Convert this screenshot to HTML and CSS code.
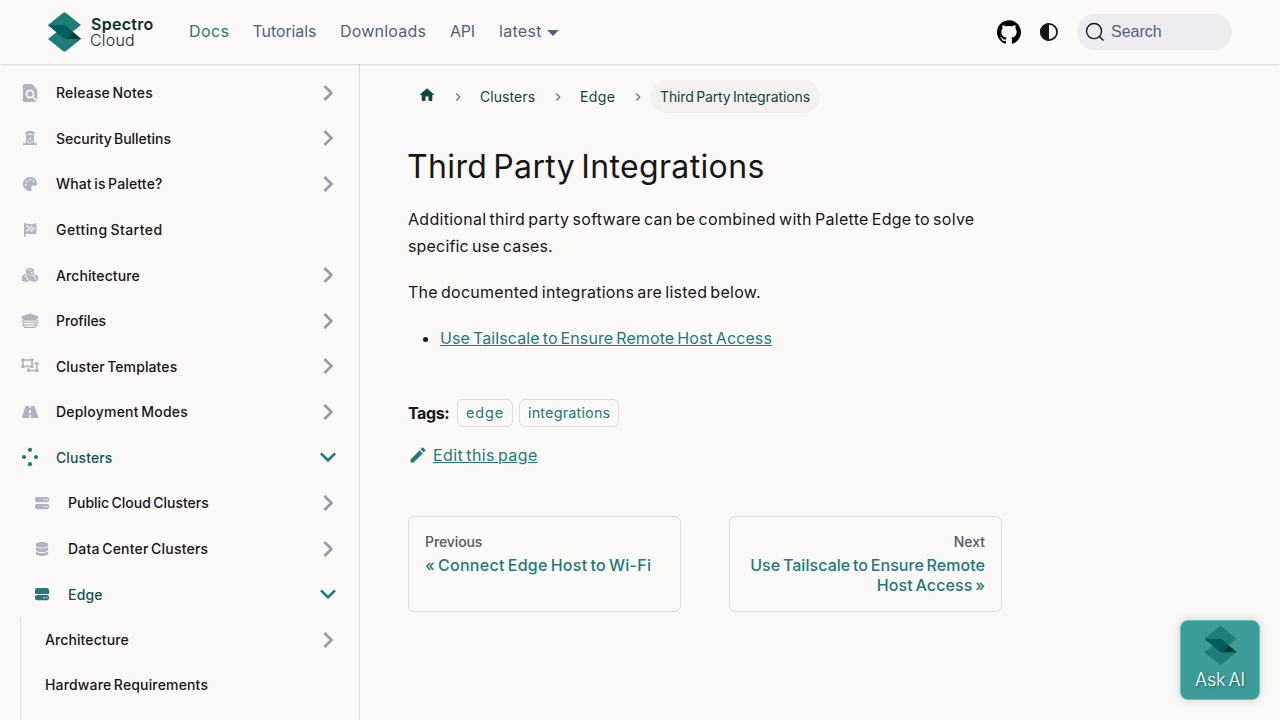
FILE: index.html
```html
<!DOCTYPE html>
<html lang="en">
<head>
<meta charset="utf-8">
<title>Third Party Integrations | Palette</title>
<link rel="stylesheet" href="styles.css">
</head>
<body>
<svg class="defs" width="0" height="0">
  <symbol id="chev" viewBox="0 0 24 24"><path d="M7.41 15.41L12 10.83l4.59 4.58L18 14l-6-6-6 6z"/></symbol>
  <symbol id="mark" viewBox="0 0 33 40"><path fill="#207c76" d="M15.300 .8q1.200-.9 2.400 0L33 13 16.500 26 0 13zM16.500 14L33 27 17.700 39.200q-1.200.9-2.400 0L0 27z"/><path fill="#005f5c" d="M0 13h15q2 0 3.500 1.200L33 26.700H18q-2 0-3.500-1.200z"/><path fill="#053c3a" d="M25 20.300L33 26.900H18z"/></symbol>
</svg>
<header class="navbar">
  <a class="brand"><svg class="brand-mark"><use href="#mark"/></svg><span class="brand-name"><b>Spectro</b><i>Cloud</i></span></a>
  <nav class="nav-links"><a class="active n1">Docs</a><a class="n2">Tutorials</a><a class="n3">Downloads</a><a class="n4">API</a><a class="n5">latest<span class="caret"></span></a></nav>
  <div class="nav-tools">
    <svg class="github" viewBox="0 0 24 24"><path d="M12 .297c-6.63 0-12 5.373-12 12 0 5.303 3.438 9.8 8.205 11.385.6.113.82-.258.82-.577 0-.285-.01-1.04-.015-2.04-3.338.724-4.042-1.61-4.042-1.61C4.422 18.07 3.633 17.7 3.633 17.7c-1.087-.744.084-.729.084-.729 1.205.084 1.838 1.236 1.838 1.236 1.07 1.835 2.809 1.305 3.495.998.108-.776.417-1.305.76-1.605-2.665-.3-5.466-1.332-5.466-5.93 0-1.31.465-2.38 1.235-3.22-.135-.303-.54-1.523.105-3.176 0 0 1.005-.322 3.3 1.23.96-.267 1.98-.399 3-.405 1.02.006 2.04.138 3 .405 2.28-1.552 3.285-1.23 3.285-1.23.645 1.653.24 2.873.12 3.176.765.84 1.23 1.91 1.23 3.22 0 4.61-2.805 5.625-5.475 5.92.42.36.81 1.096.81 2.22 0 1.606-.015 2.896-.015 3.286 0 .315.21.69.825.57C20.565 22.092 24 17.592 24 12.297c0-6.627-5.373-12-12-12"/></svg>
    <svg class="contrast" viewBox="0 0 18 18"><circle cx="9" cy="9" r="8.1" fill="none" stroke="#161616" stroke-width="1.8"/><path d="M9 0a9 9 0 0 0 0 18z"/></svg>
    <div class="search"><svg viewBox="0 0 20 20"><path d="M14.386 14.386l4.0877 4.0877-4.0877-4.0877c-2.9418 2.9419-7.7115 2.9419-10.6533 0-2.9419-2.9418-2.9419-7.7115 0-10.6533 2.9418-2.9419 7.7115-2.9419 10.6533 0 2.9419 2.9418 2.9419 7.7115 0 10.6533z" fill="none" stroke="#161616" stroke-width="1.4"/></svg><span>Search</span></div>
  </div>
</header>
<div class="layout">
<aside class="sidebar">
  <a class="row"><svg class="ico" viewBox="2 2 20 20"><path d="M20 19.59V8l-6-6H6c-1.1 0-1.99.9-1.99 2L4 20c0 1.1.89 2 1.99 2H18c.45 0 .85-.15 1.19-.4l-4.43-4.43c-.8.52-1.74.83-2.76.83-2.76 0-5-2.24-5-5s2.24-5 5-5 5 2.24 5 5c0 1.02-.31 1.96-.83 2.75L20 19.59zM9 13c0 1.66 1.34 3 3 3s3-1.34 3-3-1.34-3-3-3-3 1.34-3 3z"/></svg><span class="t1">Release Notes</span><svg class="chev"><use href="#chev"/></svg></a>
  <a class="row"><svg class="ico" viewBox="0 0 18 18"><path fill-rule="evenodd" d="M4.300 3.200Q9-.4 13.700 3.200v2.200h-.9V8.500l.6 5.800H16V16H2v-1.700h2.600l.6-5.800V5.400h-.9zM6.500 4.700v1h5v-1zM7 9.300l2 1.400 2-1.400zM6.500 10.800l-.4 3.300 2-1.900zM11.500 10.800L9.900 12.200l2 1.900zM9 13l-1.500 1.400h3z"/></svg><span class="t2">Security Bulletins</span><svg class="chev"><use href="#chev"/></svg></a>
  <a class="row"><svg class="ico sm" viewBox="0 0 512 512"><path d="M512 256c0 .9 0 1.800 0 2.700c-.4 36.500-33.600 61.300-70.100 61.300H344c-26.500 0-48 21.500-48 48c0 3.400 .4 6.700 1 9.900c2.100 10.200 6.500 20 10.800 29.900c6.100 13.800 12.100 27.500 12.100 42c0 31.800-21.600 60.700-53.400 62c-3.500 .1-7 .2-10.600 .2C114.600 512 0 397.400 0 256S114.600 0 256 0S512 114.600 512 256zM128 288a32 32 0 1 0 -64 0 32 32 0 1 0 64 0zm0-96a32 32 0 1 0 0-64 32 32 0 1 0 0 64zM288 96a32 32 0 1 0 -64 0 32 32 0 1 0 64 0zm96 96a32 32 0 1 0 0-64 32 32 0 1 0 0 64z"/></svg><span class="t3">What is Palette?</span><svg class="chev"><use href="#chev"/></svg></a>
  <a class="row"><svg class="ico" viewBox="0 0 18 18"><path fill-rule="evenodd" d="M3 2h1.400v1c3-1.200 5 1 8 0l3-.8V12.500c-4 2-6.400-.6-11 .8V16H3zM5.500 4.500v2l2-.4v-2zM9.500 4.500v2l2 .3v-2zM7.500 6.200v2l2 .2v-2zM11.500 6.800v2l2-.4v-2zM5.500 8.500v2l2-.4v-2zM9.500 8.500v2l2 .3v-2z"/></svg><span class="t4">Getting Started</span></a>
  <a class="row"><svg class="ico" viewBox="0 0 18 18"><path fill-rule="evenodd" d="M9 1.800l3.900 1.500v4.500L9 9.400 5.100 7.800V3.300zM9 3.200l-2 .8 2 .8 2-.8zM9.700 6.200v1.500l1.700-.8V5.500z"/><path fill-rule="evenodd" d="M4.900 8.200l4 1.500v4.700l-4 1.600-4-1.600V9.700zM4.900 9.600l-2 .8 2 .8 2-.8zM5.600 12.500V14l1.700-.8v-1.400z"/><path fill-rule="evenodd" d="M13.100 8.200l4 1.500v4.700l-4 1.600-4-1.600V9.700zM13.100 9.600l-2 .8 2 .8 2-.8zM13.800 12.500V14l1.700-.8v-1.400z"/></svg><span class="t5">Architecture</span><svg class="chev"><use href="#chev"/></svg></a>
  <a class="row"><svg class="ico" viewBox="0 0 18 18"><path d="M9 1.500l8.300 2.800v2L14 8.800H4L.7 6.300v-2z"/><path fill="none" stroke="#b0b3c2" stroke-width="1.300" d="M.8 7.700L4 10.400h10l3.200-2.700M.8 10.200L4 12.900h10l3.200-2.700M1.500 12.900L4 15.300h10l2.500-2.400"/></svg><span class="t6">Profiles</span><svg class="chev"><use href="#chev"/></svg></a>
  <a class="row"><svg class="ico" viewBox="0 0 18 18"><path fill="none" stroke="#b0b3c2" stroke-width="1.500" d="M2 3h9v6.500H2zM12.500 6.500h3.300v7H7.500v-2.300"/><path d="M.4 1.400h2.800v2.800H.4zM9.600 1.400h2.800v2.800H9.600zM.4 8.300h2.800v2.800H.4zM9.600 8.300h2.800v2.800H9.600zM14.700 5.200h2.800V8h-2.800zM14.700 12.200h2.800V15h-2.800zM6 12.200h2.800V15H6z"/></svg><span class="t7">Cluster Templates</span><svg class="chev"><use href="#chev"/></svg></a>
  <a class="row"><svg class="ico" viewBox="0 0 18 18"><path fill-rule="evenodd" d="M4.500 3h3.700v2.200h1.600V3h3.700L17 13.500q.3 1.500-1 1.500H9.800v-3H8.200v3H2q-1.300 0-1-1.500zM8.200 7v3h1.600V7z"/></svg><span class="t8">Deployment Modes</span><svg class="chev"><use href="#chev"/></svg></a>
  <a class="row open"><svg class="ico dots" viewBox="0 0 18 18"><circle cx="9" cy="1.800" r="2.100"/><circle cx="3" cy="9" r="2.100"/><circle cx="15" cy="9" r="2.100"/><circle cx="9" cy="16.200" r="2.100"/></svg><span class="t9">Clusters</span><svg class="chev"><use href="#chev"/></svg></a>
  <a class="row sub"><svg class="ico" viewBox="0 0 18 18"><path fill-rule="evenodd" d="M3.800 3h10.400A1.800 1.800 0 0 1 16 4.800v1.600a1.800 1.800 0 0 1-1.800 1.800H3.800A1.800 1.800 0 0 1 2 6.400V4.800A1.800 1.800 0 0 1 3.800 3zM10.700 5v1.200h1.200V5zM13 5v1.200h1.200V5zM3.800 10h10.400a1.800 1.800 0 0 1 1.800 1.800v1.600a1.800 1.800 0 0 1-1.800 1.800H3.800A1.800 1.800 0 0 1 2 13.400v-1.600A1.800 1.800 0 0 1 3.800 10zM10.700 12v1.200h1.200V12zM13 12v1.200h1.200V12z"/></svg><span class="t10">Public Cloud Clusters</span><svg class="chev"><use href="#chev"/></svg></a>
  <a class="row sub"><svg class="ico sm" viewBox="-32 0 512 512"><path d="M448 80v48c0 44.200-100.300 80-224 80S0 172.200 0 128V80C0 35.800 100.300 0 224 0S448 35.800 448 80zM393.200 214.700c20.800-7.400 39.900-16.900 54.800-28.600V288c0 44.200-100.300 80-224 80S0 332.200 0 288V186.100c14.900 11.800 34 21.200 54.800 28.600C99.700 230.700 159.500 240 224 240s124.300-9.300 169.200-25.300zM0 346.100c14.900 11.800 34 21.200 54.800 28.600C99.700 390.700 159.500 400 224 400s124.300-9.300 169.200-25.300c20.800-7.400 39.900-16.900 54.800-28.600V432c0 44.200-100.300 80-224 80S0 476.200 0 432V346.100z"/></svg><span class="t11">Data Center Clusters</span><svg class="chev"><use href="#chev"/></svg></a>
  <a class="row sub open"><svg class="ico" viewBox="0 0 18 18"><path fill-rule="evenodd" d="M4 3h10q2 0 2 2v4H2V5q0-2 2-2zM4 10h10q2 0 2 2v1.200q0 2-2 2H4q-2 0-2-2V12q0-2 2-2zM10.500 12v1.200h1.200V12zM13 12v1.200h1.200V12z"/></svg><span class="t12">Edge</span><svg class="chev"><use href="#chev"/></svg></a>
  <div class="nested">
    <a class="row"><span class="t5">Architecture</span><svg class="chev"><use href="#chev"/></svg></a>
    <a class="row leaf"><span class="t13">Hardware Requirements</span></a>
  </div>
</aside>
<main class="content">
  <nav class="crumbs"><svg class="home" viewBox="0 0 24 24"><path d="M10 19v-5h4v5c0 .55.45 1 1 1h3c.55 0 1-.45 1-1v-7h1.700c.46 0 .68-.57.33-.87L12.670 3.600c-.38-.34-.96-.34-1.340 0l-8.360 7.530c-.34.3-.13.87.33.87H5v7c0 .55.45 1 1 1h3c.55 0 1-.45 1-1z"/></svg><svg class="sep s1"><use href="#chev"/></svg><span class="c1">Clusters</span><svg class="sep s2"><use href="#chev"/></svg><span class="c2">Edge</span><svg class="sep s3"><use href="#chev"/></svg><span class="pill"><span class="c3">Third Party Integrations</span></span></nav>
  <h1>Third Party Integrations</h1>
  <p><span class="p1">Additional third party software can be combined with Palette Edge to solve</span><br><span class="p2">specific use cases.</span></p>
  <p><span class="p3">The documented integrations are listed below.</span></p>
  <ul><li><a class="link p4">Use Tailscale to Ensure Remote Host Access</a></li></ul>
  <div class="tags"><b>Tags:</b><span class="tag g1">edge</span><span class="tag g2">integrations</span></div>
  <div class="edit"><svg viewBox="0 0 40 40"><path d="m34.500 11.700l-3 3.100-6.300-6.300 3.100-3q0.500-0.500 1.200-0.500t1.100 0.500l3.900 3.900q0.500 0.400 0.500 1.100t-0.500 1.200z m-29.500 17.100l18.400-18.500 6.300 6.300-18.400 18.400h-6.300v-6.200z"/></svg><a class="link e1">Edit this page</a></div>
  <nav class="pager">
    <a class="card"><small class="k1">Previous</small><span class="k2">« Connect Edge Host to Wi-Fi</span></a>
    <a class="card next"><small class="k3">Next</small><span class="k4">Use Tailscale to Ensure Remote</span><span class="k5">Host Access »</span></a>
  </nav>
</main>
</div>
<button class="ask"><svg><use href="#mark"/></svg><span>Ask AI</span></button>
</body>
</html>
```
FILE: styles.css
```css
* { box-sizing: border-box; }
html { overflow: hidden; }
body { margin: 0; height: 720px; overflow: hidden; background: #fbf9f8; color: #161616; font-family: Inter, "Liberation Sans", sans-serif; font-size: 16px; }
svg { fill: currentColor; flex: none; display: block; }
.defs { position: absolute; }
.navbar { position: relative; height: 64px; padding: 0 48px; display: flex; align-items: center; box-shadow: 0 1px 2px rgba(0,0,0,.16); }
.brand { display: flex; width: 141px; }
.brand-mark { width: 33px; height: 40px; }
.brand-name { display: flex; flex-direction: column; margin: 4px 0 0 10px; font-size: 16px; line-height: 16px; color: #0a2e2c; }
.brand-name b { font-weight: 600; letter-spacing: .3px; }
.brand-name i { font-style: normal; font-weight: 300; letter-spacing: .2px; margin-left: -1px; }
.nav-links { display: flex; color: #545f7e; line-height: 24px; margin-top: -2px; }
.nav-links a { white-space: nowrap; }
.nav-links .active { color: #1f7a78; }
.n1 { width: 63.5px; letter-spacing: .4px; }
.n2 { width: 87.5px; letter-spacing: -.1px; }
.n3 { width: 110px; letter-spacing: .22px; }
.n4 { width: 49px; letter-spacing: -.3px; }
.n5 { display: flex; align-items: center; letter-spacing: .3px; }
.caret { margin: 3px 0 0 5px; border: 6px solid transparent; border-top-color: #545f7e; border-bottom: 0; }
.nav-tools { margin-left: auto; display: flex; align-items: center; }
.github { width: 24px; height: 24px; color: #000; margin-right: 19px; }
.contrast { width: 18px; height: 18px; margin-right: 19px; }
.search { width: 155px; height: 36px; border-radius: 18px; background: #ebedf0; display: flex; align-items: center; padding-left: 8px; gap: 6px; color: #545f7e; font: 16px "Liberation Sans", Arial, sans-serif; }
.search svg { width: 20px; height: 20px; }
.layout { display: flex; height: 656px; overflow: hidden; }
.sidebar { width: 360px; height: 656px; overflow: hidden; border-right: 1px solid #dadde1; padding: 6px 15px 0 21px; }
.row { display: flex; align-items: center; height: 45.58px; font-size: 14px; font-weight: 500; white-space: nowrap; word-spacing: -1.4px; }
.row span { margin-left: 17px; }
.t1 { letter-spacing: .19px; }
.t2 { letter-spacing: -.03px; }
.t3 { letter-spacing: .15px; }
.t4 { letter-spacing: .45px; }
.t5 { letter-spacing: .1px; }
.t6 { letter-spacing: -.1px; }
.t7 { letter-spacing: .1px; }
.t8 { letter-spacing: .21px; }
.t9 { letter-spacing: .1px; }
.t11 { letter-spacing: .2px; }
.t12 { letter-spacing: .2px; }
.t13 { letter-spacing: .16px; }
.ico { width: 18px; height: 18px; color: #b0b3c2; }
.dots { overflow: visible; }
.sm { width: 14px; height: 14px; margin: 0 2px; }
.chev { width: 32px; height: 32px; margin-left: auto; color: #9899ae; transform: rotate(90deg); }
.open { color: #135352; }
.open .ico, .open .chev { color: #1f7a78; }
.open .chev { transform: rotate(180deg); }
.sub { padding-left: 12px; }
.nested { margin-left: -1px; border-left: 1px solid #dadde1; height: 104px; margin-top: .5px; padding-left: 7px; }
.nested .row { height: 44.6px; }
.content { width: 642px; padding: 16px 0 0 48px; }
.crumbs { display: flex; align-items: center; height: 33px; font-size: 14px; color: #0e4543; white-space: nowrap; }
.home { width: 18px; height: 18px; margin: -4px 14px 0 10px; color: #0e4543; }
.sep { width: 16px; height: 16px; color: #777; transform: rotate(90deg); }
.s1, .s2 { margin-right: 14px; }
.s3 { margin-right: 4px; }
.c1 { width: 70px; letter-spacing: .07px; }
.c2 { width: 50px; letter-spacing: .4px; }
.c3 { letter-spacing: -.12px; word-spacing: -1.4px; }
.pill { width: 170px; height: 33px; border-radius: 17px; background: #f3f0ed; padding: 8px 10px; line-height: 17px; }
h1 { margin: 34px 0 19px -1px; font-size: 32px; line-height: 40px; font-weight: 400; letter-spacing: .35px; word-spacing: -3.2px; white-space: nowrap; }
p { margin: 0 0 19px; line-height: 27px; white-space: nowrap; }
ul { margin: 0; padding-left: 32px; line-height: 27px; }
.p1, .p2, .p3, .p4, .e1, .k2, .k4, .k5 { word-spacing: -1.6px; }
.p1 { letter-spacing: .28px; }
.p2 { letter-spacing: .17px; }
.p3 { letter-spacing: .26px; }
.p4 { letter-spacing: .1px; }
.e1 { letter-spacing: .37px; }
.k1 { letter-spacing: -.1px; }
.k2 { letter-spacing: .29px; }
.k4 { letter-spacing: .05px; }
.k5 { letter-spacing: .1px; }
.link { color: #1f7a78; text-decoration: underline; white-space: nowrap; }
.tags { display: flex; align-items: center; margin-top: 47px; height: 28px; }
.tags b { width: 49px; letter-spacing: -.4px; }
.tag { height: 28px; border: 1px solid #dadde5; border-radius: 6px; padding: 0 8px; font-size: 14.4px; line-height: 25px; color: #1f7a78; margin-right: 6px; }
.g1 { width: 56px; letter-spacing: .9px; }
.g2 { width: 100px; letter-spacing: .18px; }
.edit { display: flex; align-items: center; height: 24px; margin-top: 16px; }
.edit svg { width: 20px; height: 20px; color: #1f7a78; margin-right: 5px; }
.pager { display: grid; grid-template-columns: 273px 273px; gap: 48px; margin-top: 49px; }
.card { height: 96px; border: 1px solid #dadde5; border-radius: 6px; padding: 16px; display: flex; flex-direction: column; color: #1f7a78; font-weight: 500; line-height: 20px; white-space: nowrap; }
.card small { font-size: 14px; line-height: 18px; margin-bottom: 4px; color: #525860; }
.next { align-items: flex-end; }
.ask { position: absolute; left: 1180px; top: 620px; width: 80px; height: 80px; border: 1px solid #5fc4b8; border-radius: 8px; background: #3b9c98; box-shadow: 0 0 8px rgba(0,0,0,.18); padding: 5px 0 0; display: flex; flex-direction: column; align-items: center; color: #fff; font: 300 18px/24px Inter, sans-serif; letter-spacing: -.2px; word-spacing: -1.8px; text-shadow: 1px 1px 2px rgba(0,0,0,.4); }
.ask svg { width: 33px; height: 39px; }
.ask span { margin-top: 3px; white-space: nowrap; }
```
